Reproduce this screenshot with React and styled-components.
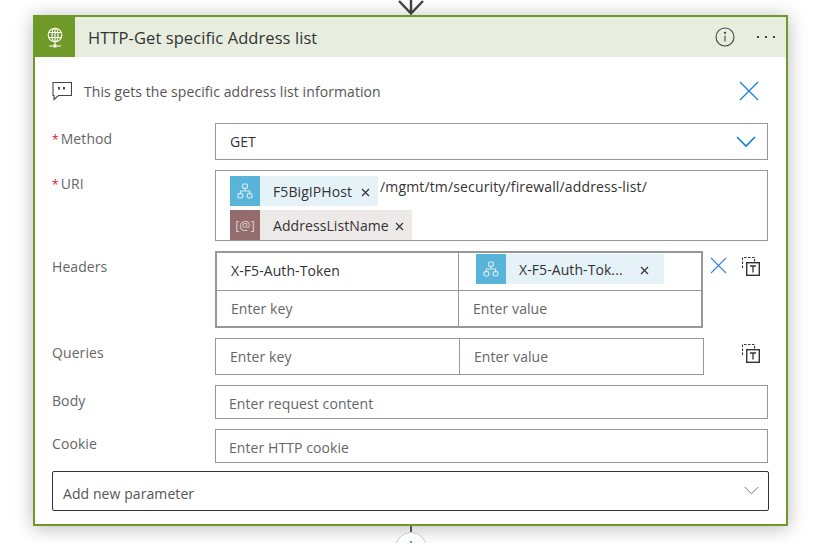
import React from 'react';
import styled, { createGlobalStyle } from 'styled-components';

const GlobalStyle = createGlobalStyle`
  html, body {
    margin: 0;
    padding: 0;
    height: 543px;
    overflow: hidden;
    background: #fff;
    font-family: "Open Sans", "Noto Sans", sans-serif;
    letter-spacing: 0.08px;
  }
`;

const Page = styled.div`
  width: 755px;
  height: 543px;
  margin-left: 33px;
  display: flex;
  flex-direction: column;
  align-items: center;
`;

const TopArrow = styled.svg`
  display: block;
  width: 26px;
  height: 15px;
  flex: none;
`;

const Card = styled.section`
  box-sizing: border-box;
  width: 755px;
  height: 511px;
  flex: none;
  border: 2px solid #6f9a27;
  background: #fff;
  box-shadow: 0 2px 18px rgba(0, 0, 0, 0.28);
`;

const CardHeader = styled.header`
  display: flex;
  align-items: center;
  height: 40px;
  background: #e8eedf;
`;

const HeaderIcon = styled.div`
  width: 40px;
  height: 40px;
  flex: none;
  background: #6f9a27;
  display: flex;
  align-items: center;
  justify-content: center;
`;

const Title = styled.h1`
  flex: 1;
  margin: 0 0 0 13px;
  font-size: 16.5px;
  font-weight: 400;
  color: #333;
  white-space: nowrap;
`;

const HeaderActions = styled.div`
  display: flex;
  align-items: center;
  gap: 22px;
  padding-right: 11px;
`;

const CardBody = styled.div`
  padding: 24px 18px 0 17px;
  display: flex;
  flex-direction: column;
`;

const Description = styled.div`
  display: flex;
  align-items: center;
  height: 20px;
  margin-bottom: 22px;
  color: #555;
  font-size: 14px;
`;

const DescriptionText = styled.span`
  flex: 1;
  margin-left: 12px;
  white-space: nowrap;
`;

const CloseIcon = styled.svg`
  display: block;
  width: 20px;
  height: 20px;
  margin-right: 9px;
  flex: none;
`;

const Rows = styled.div`
  display: flex;
  flex-direction: column;
  gap: 10px;
`;

const Row = styled.div`
  display: grid;
  grid-template-columns: 163px 1fr;
`;

const Label = styled.label`
  padding-top: ${(p) => p.$top ?? 5}px;
  line-height: 20px;
  font-size: 14px;
  color: #666;
`;

const Star = styled.span`
  color: #e81123;
  font-size: 12px;
  margin-right: 2px;
`;

const Field = styled.div`
  box-sizing: border-box;
  height: ${(p) => p.$height}px;
  border: 1px solid #979797;
  display: flex;
  align-items: center;
  padding: 0 13px;
  font-size: 14px;
  color: #666;
`;

const FieldText = styled.span`
  padding-top: 2px;
`;

const SelectField = styled(Field)`
  justify-content: space-between;
  padding: 0 11px 0 14px;
  color: #333;
`;

const UriField = styled.div`
  box-sizing: border-box;
  height: 71px;
  border: 1px solid #979797;
  padding: 5px 14px 0;
  display: flex;
  flex-wrap: wrap;
  align-content: flex-start;
  row-gap: 4px;
  font-size: 14px;
  color: #333;
`;

const PathText = styled.span`
  margin: 1px 0 0 2px;
  line-height: 20px;
  letter-spacing: 0.15px;
  white-space: nowrap;
`;

const Token = styled.span`
  display: inline-flex;
  align-items: center;
  height: 30px;
  width: ${(p) => p.$width}px;
  background: ${(p) => (p.$kind === 'param' ? '#ede9e8' : '#e5f2f8')};
  color: #333;
  font-size: 14px;
  flex: none;
`;

const TokenIcon = styled.span`
  width: 30px;
  height: 30px;
  flex: none;
  display: flex;
  align-items: center;
  justify-content: center;
  background: ${(p) => (p.$kind === 'param' ? '#956c6c' : '#59b4d9')};
  color: #ddd0d0;
  font-size: 12.5px;
`;

const TokenText = styled.span`
  flex: 1;
  min-width: 0;
  margin: 1px 0 0 13px;
  white-space: nowrap;
`;

const TokenClose = styled.svg`
  display: block;
  width: 9px;
  height: 9px;
  margin-right: ${(p) => p.$right ?? 8}px;
  margin-top: 3px;
  flex: none;
`;

const TableLine = styled.div`
  display: flex;
  align-items: flex-start;
`;

const Table = styled.div`
  box-sizing: border-box;
  width: ${(p) => (p.$thick ? 488 : 489)}px;
  flex: none;
  border: ${(p) => (p.$thick ? 2 : 1)}px solid #979797;
  font-size: 14px;
`;

const TableRow = styled.div`
  display: grid;
  grid-template-columns: ${(p) => p.$keyWidth}px 1fr;
  height: ${(p) => p.$height}px;

  & + & {
    border-top: 1px solid #979797;
  }
`;

const Cell = styled.div`
  display: flex;
  align-items: center;
  padding-left: 14px;
  color: ${(p) => (p.$placeholder ? '#666' : '#333')};

  & + & {
    border-left: 1px solid #979797;
  }
`;

const FilledCell = styled(Cell)`
  padding-bottom: 3px;
`;

const TokenCell = styled(Cell)`
  align-items: flex-start;
  padding: 1px 0 0 17px;
`;

const RowActions = styled.div`
  display: flex;
  align-items: flex-start;
  padding-top: 6px;
  margin-left: ${(p) => p.$offset}px;
  gap: 15px;
`;

const AddParameter = styled.div`
  box-sizing: border-box;
  height: 40px;
  margin: 8px -1px 0 0;
  border: 1px solid #333;
  border-radius: 2px;
  display: flex;
  align-items: center;
  justify-content: space-between;
  padding: 0 9px 0 10px;
  font-size: 14px;
  color: #555;
`;

const AddLabel = styled.span`
  padding-top: 4px;
`;

const ConnectorLine = styled.div`
  width: 2px;
  height: 6px;
  flex: none;
  background: #555;
`;

const AddCircle = styled.div`
  box-sizing: border-box;
  width: 32px;
  height: 32px;
  flex: none;
  border: 1px solid #c8c8c8;
  border-radius: 50%;
  background: #fff;
  display: flex;
  align-items: center;
  justify-content: center;
`;

const Globe = () => (
  <svg width="16" height="21" viewBox="0 0 16 21" fill="none" stroke="#fff" strokeWidth="1.1">
    <circle cx="8" cy="8" r="6.8" />
    <ellipse cx="8" cy="8" rx="3" ry="6.8" />
    <path d="M1.6 5.5h12.8M1.6 10.5h12.8M8 1v18M2 19h12" />
    <rect x="6.5" y="17.5" width="3" height="3" fill="#fff" stroke="none" />
  </svg>
);

const InfoIcon = () => (
  <svg width="20" height="20" viewBox="0 0 20 20" fill="none" stroke="#444" strokeWidth="1.1">
    <circle cx="10" cy="10" r="9" />
    <path d="M10 8.5v6" />
    <circle cx="10" cy="5.8" r="0.6" fill="#444" />
  </svg>
);

const MoreIcon = () => (
  <svg width="18" height="4" viewBox="0 0 18 4" fill="#444">
    <rect x="0" y="1" width="2" height="2" />
    <rect x="8" y="1" width="2" height="2" />
    <rect x="16" y="1" width="2" height="2" />
  </svg>
);

const CommentIcon = () => (
  <svg width="20" height="20" viewBox="0 0 20 20" fill="none" stroke="#444" strokeWidth="1.1" style={{ flex: 'none' }}>
    <path d="M1 1.5h18.5v13H6.5L2 18.5v-4H1z" />
    <rect x="6" y="6" width="2" height="2.5" fill="#444" stroke="none" />
    <rect x="11" y="6" width="2" height="2.5" fill="#444" stroke="none" />
  </svg>
);

const Chevron = ({ color, width, strokeWidth }) => (
  <svg width={width} height={width / 2 + 2} viewBox="0 0 20 12" fill="none" stroke={color} strokeWidth={strokeWidth}>
    <path d="M1 1l9 9 9-9" />
  </svg>
);

const NetworkIcon = () => (
  <svg width="16" height="16" viewBox="0 0 16 16" fill="none" stroke="#d3ecf6" strokeWidth="1.2">
    <rect x="5.6" y="1" width="4.8" height="4.4" rx="1.4" />
    <rect x="1" y="10.6" width="4.8" height="4.4" rx="1.4" />
    <rect x="10.2" y="10.6" width="4.8" height="4.4" rx="1.4" />
    <path d="M8 5.4V8M3.4 10.6V8h9.2v2.6" />
  </svg>
);

const XMark = ({ right }) => (
  <TokenClose $right={right} viewBox="0 0 9 9" fill="none" stroke="#333" strokeWidth="1.2">
    <path d="M1 1l7 7M8 1l-7 7" />
  </TokenClose>
);

const BlueX = () => (
  <svg width="17" height="17" viewBox="0 0 17 17" fill="none" stroke="#3a84d0" strokeWidth="1.1">
    <path d="M1 1l15 15M16 1L1 16" />
  </svg>
);

const PasteIcon = () => (
  <svg width="19" height="19" viewBox="0 0 19 19" fill="none" stroke="#333">
    <path d="M0.5 11V0.5h12v5" strokeDasharray="2.5 1.5" strokeWidth="1.1" />
    <rect x="4.7" y="5.7" width="12.6" height="12.6" fill="#fff" strokeWidth="1.4" />
    <path d="M8 9h6M11 9v6.5" strokeWidth="1.3" />
  </svg>
);

const App = () => (
  <>
    <GlobalStyle />
    <Page>
      <TopArrow viewBox="0 0 26 15" fill="none" stroke="#444" strokeWidth="2.4">
        <path d="M13 0v13M1 1l12 12.5L25 1" />
      </TopArrow>
      <Card>
        <CardHeader>
          <HeaderIcon>
            <Globe />
          </HeaderIcon>
          <Title>HTTP-Get specific Address list</Title>
          <HeaderActions>
            <InfoIcon />
            <MoreIcon />
          </HeaderActions>
        </CardHeader>
        <CardBody>
          <Description>
            <CommentIcon />
            <DescriptionText>This gets the specific address list information</DescriptionText>
            <CloseIcon viewBox="0 0 20 20" fill="none" stroke="#0f7fd8" strokeWidth="1.2">
              <path d="M1 1l18 18M19 1L1 19" />
            </CloseIcon>
          </Description>
          <Rows>
            <Row>
              <Label $top={6}>
                <Star>*</Star>Method
              </Label>
              <SelectField $height={37}>
                GET
                <Chevron color="#0f7fd8" width={20} strokeWidth={1.6} />
              </SelectField>
            </Row>
            <Row>
              <Label $top={4}>
                <Star>*</Star>URI
              </Label>
              <UriField>
                <Token $width={148}>
                  <TokenIcon>
                    <NetworkIcon />
                  </TokenIcon>
                  <TokenText>F5BigIPHost</TokenText>
                  <XMark />
                </Token>
                <PathText>/mgmt/tm/security/firewall/address-list/</PathText>
                <Token $width={182} $kind="param">
                  <TokenIcon $kind="param">[@]</TokenIcon>
                  <TokenText>AddressListName</TokenText>
                  <XMark />
                </Token>
              </UriField>
            </Row>
            <Row>
              <Label $top={6}>Headers</Label>
              <TableLine>
                <Table $thick>
                  <TableRow $keyWidth={241} $height={37}>
                    <FilledCell>X-F5-Auth-Token</FilledCell>
                    <TokenCell>
                      <Token $width={188}>
                        <TokenIcon>
                          <NetworkIcon />
                        </TokenIcon>
                        <TokenText>X-F5-Auth-Tok...</TokenText>
                        <XMark right={15} />
                      </Token>
                    </TokenCell>
                  </TableRow>
                  <TableRow $keyWidth={241} $height={35}>
                    <Cell $placeholder>Enter key</Cell>
                    <Cell $placeholder>Enter value</Cell>
                  </TableRow>
                </Table>
                <RowActions $offset={7}>
                  <BlueX />
                  <PasteIcon />
                </RowActions>
              </TableLine>
            </Row>
            <Row>
              <Label>Queries</Label>
              <TableLine>
                <Table>
                  <TableRow $keyWidth={243} $height={35}>
                    <Cell $placeholder>Enter key</Cell>
                    <Cell $placeholder>Enter value</Cell>
                  </TableRow>
                </Table>
                <RowActions $offset={38}>
                  <PasteIcon />
                </RowActions>
              </TableLine>
            </Row>
            <Row>
              <Label $top={6}>Body</Label>
              <Field $height={34}>
                <FieldText>Enter request content</FieldText>
              </Field>
            </Row>
            <Row>
              <Label>Cookie</Label>
              <Field $height={34}>
                <FieldText>Enter HTTP cookie</FieldText>
              </Field>
            </Row>
          </Rows>
          <AddParameter>
            <AddLabel>Add new parameter</AddLabel>
            <Chevron color="#666" width={15} strokeWidth={1.2} />
          </AddParameter>
        </CardBody>
      </Card>
      <ConnectorLine />
      <AddCircle>
        <svg width="14" height="14" viewBox="0 0 14 14" stroke="#0f7fd8" strokeWidth="1.5">
          <path d="M7 0v14M0 7h14" />
        </svg>
      </AddCircle>
    </Page>
  </>
);

export default App;
